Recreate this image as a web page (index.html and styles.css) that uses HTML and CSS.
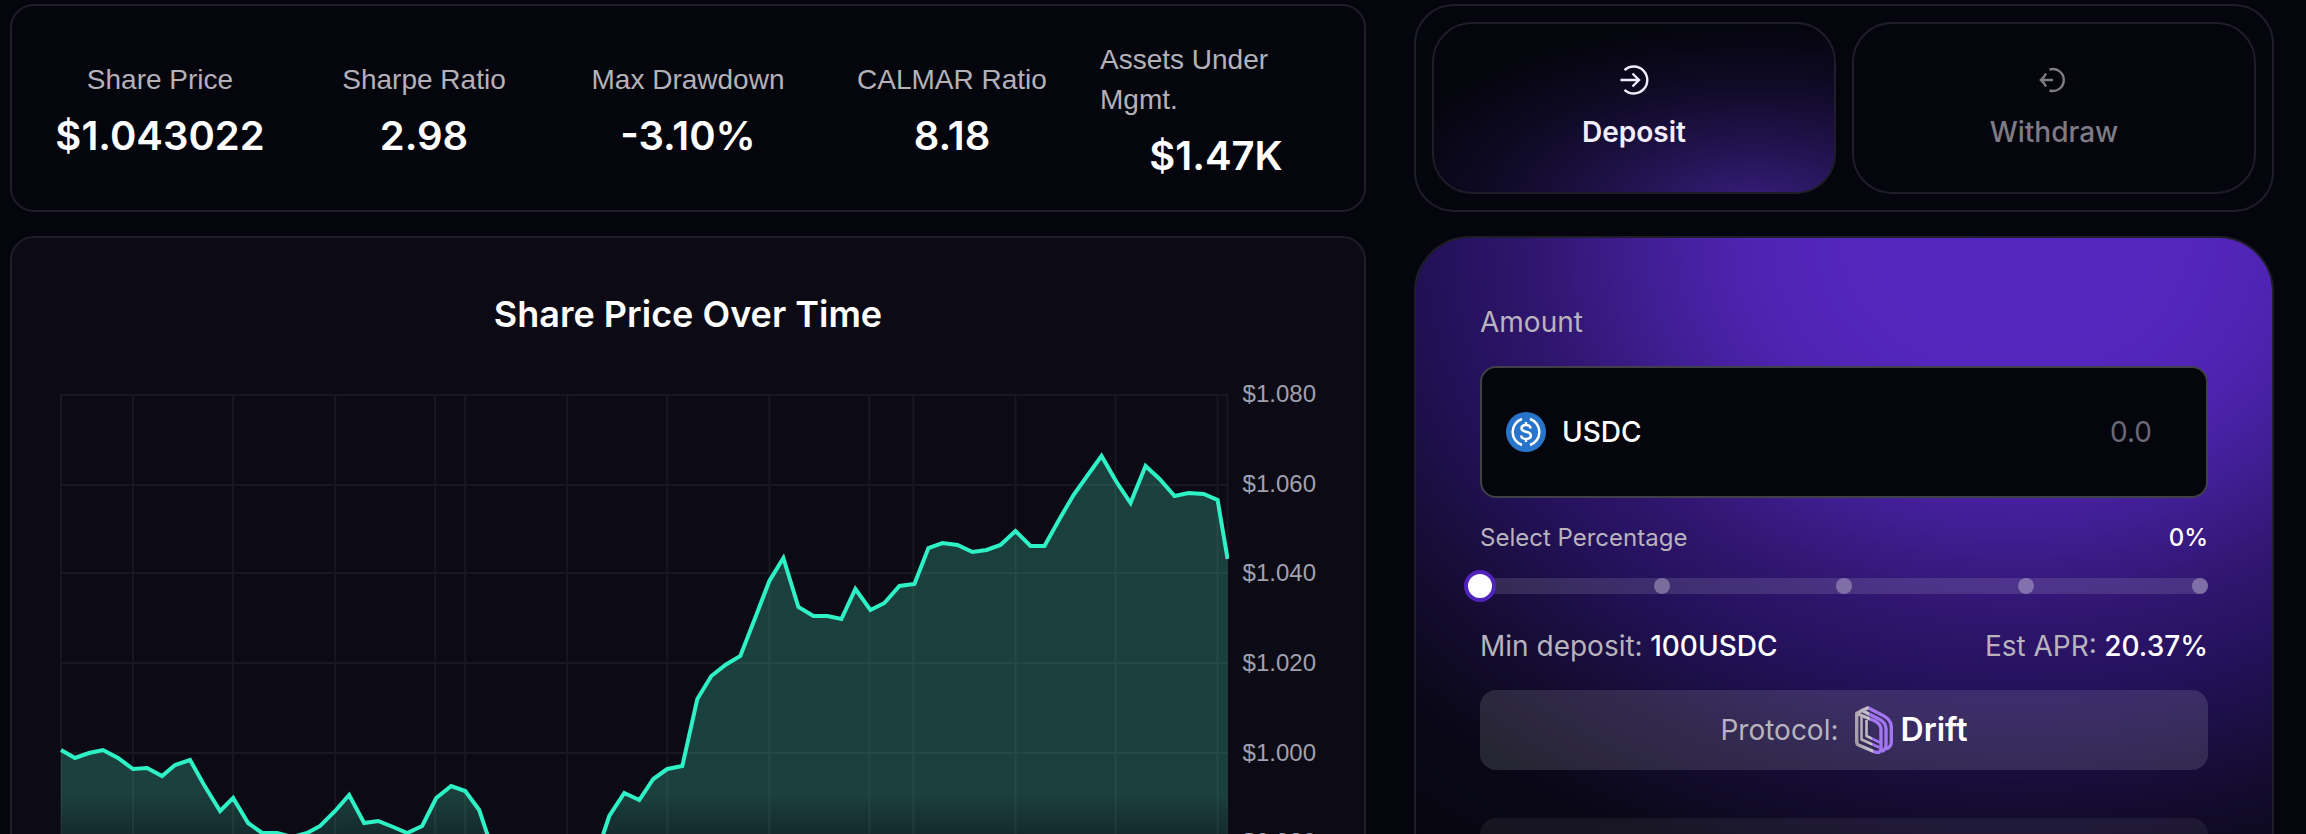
FILE: index.html
```html
<!DOCTYPE html>
<html lang="en">
  <head>
    <meta charset="UTF-8" />
    <meta name="viewport" content="width=device-width, initial-scale=1.0" />
    <title>Vault</title>
    <link rel="stylesheet" href="styles.css">
  </head>
  <body>
    <main class="vault">
      <section class="card stats">
        <div class="stat">
          <p class="stat-label">Share Price</p>
          <p class="stat-value">$1.043022</p>
        </div>
        <div class="stat">
          <p class="stat-label">Sharpe Ratio</p>
          <p class="stat-value">2.98</p>
        </div>
        <div class="stat">
          <p class="stat-label">Max Drawdown</p>
          <p class="stat-value">-3.10%</p>
        </div>
        <div class="stat">
          <p class="stat-label">CALMAR Ratio</p>
          <p class="stat-value">8.18</p>
        </div>
        <div class="stat">
          <p class="stat-label">Assets Under Mgmt.</p>
          <p class="stat-value">$1.47K</p>
        </div>
      </section>

      <div class="card tabs">
        <button type="button" class="tab tab-active">
          <svg class="tab-icon" viewBox="0 0 32 32">
            <path d="M6.500 6.200A13.500 13.500 0 1 1 6.500 25.800" />
            <path d="M2.500 16H20M14.500 9.500L21 16L14.500 22.500" />
          </svg>
          Deposit
        </button>
        <button type="button" class="tab">
          <svg class="tab-icon" viewBox="0 0 32 32">
            <path d="M11.500 5.500A11 11 0 1 1 11.500 26.500" />
            <path d="M15 16H3M8 9.500Q6 13.500 3 16Q6 18.500 8 22.500" />
          </svg>
          Withdraw
        </button>
      </div>

      <section class="card chart-card">
        <h2>Share Price Over Time</h2>
        <div class="chart">
          <svg class="plot" viewBox="0 0 1168 540" preserveAspectRatio="none">
            <defs>
              <linearGradient id="areaFill" gradientUnits="userSpaceOnUse" x1="0" y1="400" x2="0" y2="500">
                <stop offset="0" stop-color="#48eac0" stop-opacity="0.24" />
                <stop offset="1" stop-color="#48eac0" stop-opacity="0" />
              </linearGradient>
            </defs>
            <path class="grid-lines" d="M0 1H1168M0 91H1168M0 179H1168M0 269H1168M0 359H1168M0 449H1168M0 539H1168
              M1 0V540M73 0V540M173 0V540M275 0V540M375 0V540M405 0V540M507 0V540M607 0V540
              M709 0V540M809 0V540M853 0V540M955 0V540M1055 0V540M1157 0V540M1167 0V540" />
            <path fill="url(#areaFill)" d="M1 356L15 364L29 359L43 356L58 364L73 375L87 374L102 382L115 371L130 366L144 391L160 417L173 404L188 429L202 439L217 439L232 443L247 439L260 432L275 417L289 401L304 429L318 427L333 433L347 439L362 432L376 404L391 392L405 397L419 416L427 440L434 470L448 500L477 515L506 508L520 490L535 460L543 440L549 422L564 399L579 406L593 385L607 375L622 372L637 305L651 282L665 271L680 262L694 226L709 187L723 164L738 213L753 222L767 222L781 225L795 195L810 216L824 209L839 192L854 190L868 154L882 149L897 151L912 158L926 156L940 151L955 137L970 152L984 152L999 125L1013 101L1028 80L1041 62L1056 88L1070 109L1085 72L1099 85L1114 102L1128 99L1143 100L1157 106L1167 165V540H1Z" />
            <path class="price-line" d="M1 356L15 364L29 359L43 356L58 364L73 375L87 374L102 382L115 371L130 366L144 391L160 417L173 404L188 429L202 439L217 439L232 443L247 439L260 432L275 417L289 401L304 429L318 427L333 433L347 439L362 432L376 404L391 392L405 397L419 416L427 440L434 470L448 500L477 515L506 508L520 490L535 460L543 440L549 422L564 399L579 406L593 385L607 375L622 372L637 305L651 282L665 271L680 262L694 226L709 187L723 164L738 213L753 222L767 222L781 225L795 195L810 216L824 209L839 192L854 190L868 154L882 149L897 151L912 158L926 156L940 151L955 137L970 152L984 152L999 125L1013 101L1028 80L1041 62L1056 88L1070 109L1085 72L1099 85L1114 102L1128 99L1143 100L1157 106L1167 165" />
          </svg>
          <ul class="prices">
            <li>$1.080</li>
            <li>$1.060</li>
            <li>$1.040</li>
            <li>$1.020</li>
            <li>$1.000</li>
            <li>$0.980</li>
            <li>$0.960</li>
          </ul>
        </div>
      </section>

      <form class="card deposit">
        <label class="muted" for="amount">Amount</label>
        <div class="amount-box">
          <svg class="usdc" viewBox="0 0 40 40">
            <circle cx="20" cy="20" r="20" fill="#2775ca" />
            <g fill="none" stroke="#fff" stroke-width="2.500">
              <path d="M16 7A13.700 13.700 0 0 0 16 33M24 7A13.700 13.700 0 0 1 24 33" />
              <path d="M24.500 16.500Q24.300 13 20 13Q15.500 13 15.500 16.300Q15.500 19 20 19.800Q24.800 20.600 24.800 23.600Q24.800 27 20 27Q15.500 27 15.200 23.500M20 10V13.500M20 26.500V30" />
            </g>
          </svg>
          <span>USDC</span>
          <input id="amount" class="amount" type="text" inputmode="decimal" placeholder="0.0" />
        </div>

        <div class="row small">
          <label class="muted" for="percent">Select Percentage</label>
          <output for="percent">0%</output>
        </div>
        <div class="slider">
          <span class="dot" style="left: 25%"></span>
          <span class="dot" style="left: 50%"></span>
          <span class="dot" style="left: 75%"></span>
          <span class="dot dot-last"></span>
          <input id="percent" type="range" min="0" max="100" step="25" value="0" />
        </div>

        <div class="row terms">
          <p><span class="muted">Min deposit:</span> 100USDC</p>
          <p><span class="muted">Est APR:</span> 20.37%</p>
        </div>

        <div class="protocol">
          <span class="muted">Protocol:</span>
          <svg class="drift-logo" viewBox="0 0 38 48">
            <defs>
              <linearGradient id="drift" gradientUnits="userSpaceOnUse" x1="0" y1="24" x2="38" y2="20">
                <stop offset="0" stop-color="#a79da8" />
                <stop offset="0.400" stop-color="#c9c3cc" />
                <stop offset="0.420" stop-color="#a276f0" />
                <stop offset="1" stop-color="#a276f0" />
              </linearGradient>
            </defs>
            <g fill="none" stroke="url(#drift)" stroke-width="3.400" stroke-linejoin="round">
              <path d="M1.700 7.500V36Q1.700 38 3.500 39L20 46Q26 48 26 42V24Q26 18 20 15Z" />
              <path d="M1.700 7.500L7 4.500L23 12.500Q31 16 31 23V39Q31 43.500 26.500 45.500" />
              <path d="M7 4.500L13 1.700L28 9.500Q36.300 13.500 36.300 21V36Q36.300 41 31 43" />
              <path stroke-width="2.600" d="M6.500 11V33.500L24.500 41.500M11.500 14V30L25 36.500" />
            </g>
          </svg>
          <span class="drift-name">Drift</span>
        </div>

        <div class="summary"></div>
      </form>
    </main>
  </body>
</html>
```
FILE: styles.css
```css
* {
  box-sizing: border-box;
}

body {
  margin: 0;
  background-color: #05050e;
  color: #fff;
  font-family: Inter, "Liberation Sans", sans-serif;
  font-size: 28px;
  line-height: 40px;
}

p,
h2,
ul {
  margin: 0;
  padding: 0;
}

.vault {
  display: grid;
  grid-template-columns: minmax(0, 339fr) minmax(0, 215fr);
  grid-template-rows: auto auto;
  gap: 24px 48px;
  height: 100vh;
  padding: 4px 32px 0 10px;
  overflow: hidden;
}

.card {
  border: 2px solid #1f1d27;
  border-radius: 24px;
}

.muted {
  color: #b8b3bd;
  font-weight: 400;
}

/* stats */
.stats {
  display: grid;
  grid-template-columns: repeat(5, minmax(0, 1fr));
  align-items: center;
  padding: 16px;
}

.stat {
  display: flex;
  flex-direction: column;
  align-items: center;
  gap: 16px;
  padding: 0 16px;
}

.stat-label {
  color: #b4b2b8;
  font-family: "Liberation Sans", sans-serif;
}

.stat-value {
  font-size: 40px;
  font-weight: 600;
}

/* deposit / withdraw */
.tabs {
  display: flex;
  gap: 16px;
  padding: 16px;
  border-radius: 40px;
}

.tab {
  flex: 1;
  display: flex;
  flex-direction: column;
  align-items: center;
  gap: 16px;
  padding: 40px;
  border: 2px solid #1f1d27;
  border-radius: 40px;
  background: none;
  color: #7e7b84;
  font: inherit;
  font-weight: 500;
}

.tab-active {
  background: radial-gradient(380px 180px at 80% 108%, #371d7c, #21124c 36%, #0f0a26 68%, #05050e);
  color: #f1edfa;
  font-weight: 600;
}

.tab-icon {
  width: 32px;
  height: 32px;
  fill: none;
  stroke: currentColor;
  stroke-width: 2.4;
}

/* chart */
.chart-card {
  padding: 56px 48px 48px;
  background-color: #0c0a14;
}

.chart-card h2 {
  font-size: 36px;
  font-weight: 600;
  text-align: center;
}

.chart {
  display: flex;
  gap: 14px;
  margin-top: 48px;
}

.plot {
  flex: 1;
  min-width: 0;
  height: 540px;
  margin-top: 12px;
}

.plot path {
  vector-effect: non-scaling-stroke;
}

.grid-lines {
  fill: none;
  stroke: #19171f;
  stroke-width: 2;
}

.price-line {
  fill: none;
  stroke: #2ef2c5;
  stroke-width: 4;
}

.prices {
  display: flex;
  flex-direction: column;
  justify-content: space-between;
  height: 562px;
  color: #a1a0ae;
  font-family: "Liberation Sans", sans-serif;
  font-size: 24px;
  line-height: 24px;
  list-style: none;
}

/* deposit form */
.deposit {
  display: flex;
  flex-direction: column;
  padding: 64px;
  border-radius: 56px;
  background: radial-gradient(850px 670px at 70% 0, #5526bf, #5426bc 20%, #4e23b1 32%, #3f1e92 44%, #301670 56%, #24115a 68%, #170d38 82%, #0a0818 98%, #06060f 115%);
  font-weight: 500;
}

.amount-box {
  display: flex;
  align-items: center;
  gap: 16px;
  margin: 24px 0;
  padding: 44px 54px 44px 24px;
  border: 2px solid #404048;
  border-radius: 16px;
  background-color: #05050e;
}

.usdc {
  width: 40px;
  height: 40px;
}

.amount {
  flex: 1;
  min-width: 0;
  height: 40px;
  padding: 0;
  border: 0;
  background: none;
  color: #fff;
  font: inherit;
  font-weight: 400;
  text-align: right;
}

.amount::placeholder {
  color: #6b6877;
}

.row {
  display: flex;
  justify-content: space-between;
}

.small {
  font-size: 24px;
  line-height: 32px;
}

.slider {
  position: relative;
  height: 16px;
  margin: 24px 0 32px;
  border-radius: 8px;
  background-color: rgba(255, 255, 255, 0.12);
}

.dot {
  position: absolute;
  top: 0;
  width: 16px;
  height: 16px;
  margin-left: -8px;
  border-radius: 50%;
  background-color: rgba(255, 255, 255, 0.3);
}

.dot-last {
  right: 0;
}

.slider input {
  position: absolute;
  top: -8px;
  left: -16px;
  width: calc(100% + 32px);
  height: 32px;
  margin: 0;
  background: none;
  appearance: none;
}

.slider input::-webkit-slider-thumb {
  width: 32px;
  height: 32px;
  border: 4px solid #5024bc;
  border-radius: 50%;
  background-color: #fff;
  appearance: none;
}

.protocol,
.summary {
  flex-shrink: 0;
  height: 80px;
  border-radius: 16px;
  background-color: rgba(255, 255, 255, 0.12);
}

.protocol {
  display: flex;
  align-items: center;
  justify-content: center;
  margin: 24px 0 48px;
}

.summary {
  background-color: rgba(255, 255, 255, 0.06);
}

.drift-logo {
  width: 38px;
  height: 48px;
  margin: 0 8px 0 16px;
}

.drift-name {
  font-size: 32px;
  font-weight: 600;
}
```
